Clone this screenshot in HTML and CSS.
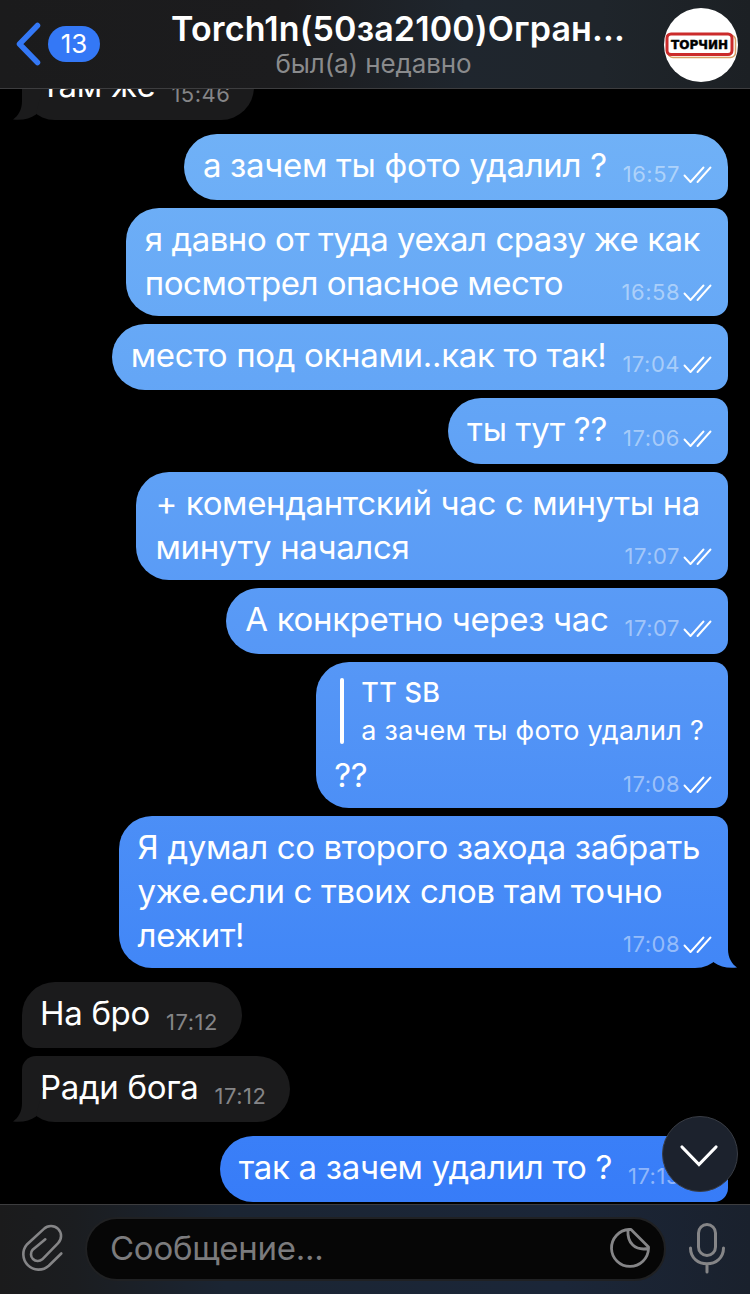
FILE: index.html
```html
<!DOCTYPE html>
<html lang="ru">
<head>
    <meta charset="utf-8">
    <title>Torch1n</title>
    <link rel="stylesheet" href="styles.css">
</head>
<body>
    <svg class="defs" width="0" height="0">
        <symbol id="checks" viewBox="0 0 30 20">
            <path d="M1.500 10.500 L7.500 17 L20.500 2.500 M14.500 17 L27.500 2.500" fill="none" stroke="#fff" stroke-width="1.900" stroke-linecap="round" stroke-linejoin="round"/>
        </symbol>
    </svg>

    <header class="header">
        <div class="back">
            <svg class="back-arrow" width="26" height="44" viewBox="0 0 26 44">
                <path d="M21.500 3.500 L3.500 22 L21.500 40.500" fill="none" stroke="#3478f6" stroke-width="5.500" stroke-linecap="round" stroke-linejoin="round"/>
            </svg>
            <span class="unread">13</span>
        </div>
        <div class="title">
            <h1 class="name">Torch1n(50за2100)Огран...</h1>
            <span class="status">был(а) недавно</span>
        </div>
        <svg class="avatar" width="74" height="74" viewBox="0 0 74 74">
            <clipPath id="round"><circle cx="37" cy="37" r="37"/></clipPath>
            <g clip-path="url(#round)">
                <rect width="74" height="74" fill="#fff"/>
                <rect x="4" y="27" width="67.500" height="22.500" rx="5" fill="#fff" stroke="#d9a066" stroke-width="1.500"/>
                <rect x="3" y="26" width="65" height="20.500" rx="4" fill="#fff" stroke="#cb2b2b" stroke-width="3"/>
                <text class="logo-text" x="7" y="40.500" textLength="57" lengthAdjust="spacingAndGlyphs">ТОРЧИН</text>
            </g>
        </svg>
    </header>

    <main class="chat">
        <div class="bubble in last">
            <p class="text">Там же</p>
            <span class="meta">15:46</span>
        </div>

        <div class="bubble out first">
            <p class="text">а зачем ты фото удалил ?</p>
            <span class="meta">16:57<svg class="checks"><use href="#checks"/></svg></span>
        </div>
        <div class="bubble out multi tight">
            <p class="text">я давно от туда уехал сразу же как<br>посмотрел опасное место</p>
            <span class="meta">16:58<svg class="checks"><use href="#checks"/></svg></span>
        </div>
        <div class="bubble out">
            <p class="text">место под окнами..как то так!</p>
            <span class="meta">17:04<svg class="checks"><use href="#checks"/></svg></span>
        </div>
        <div class="bubble out">
            <p class="text">ты тут ??</p>
            <span class="meta">17:06<svg class="checks"><use href="#checks"/></svg></span>
        </div>
        <div class="bubble out multi">
            <p class="text">+ комендантский час с минуты на<br>минуту начался</p>
            <span class="meta">17:07<svg class="checks"><use href="#checks"/></svg></span>
        </div>
        <div class="bubble out">
            <p class="text">А конкретно через час</p>
            <span class="meta">17:07<svg class="checks"><use href="#checks"/></svg></span>
        </div>
        <div class="bubble out multi with-reply">
            <div class="reply">
                <span class="reply-name">TT SB</span>
                <span class="reply-text">а зачем ты фото удалил ?</span>
            </div>
            <p class="text">??</p>
            <span class="meta">17:08<svg class="checks"><use href="#checks"/></svg></span>
        </div>
        <div class="bubble out multi last">
            <p class="text">Я думал со второго захода забрать<br>уже.если с твоих слов там точно<br>лежит!</p>
            <span class="meta">17:08<svg class="checks"><use href="#checks"/></svg></span>
        </div>

        <div class="bubble in first">
            <p class="text">На бро</p>
            <span class="meta">17:12</span>
        </div>
        <div class="bubble in last">
            <p class="text">Ради бога</p>
            <span class="meta">17:12</span>
        </div>

        <div class="bubble out first">
            <p class="text">так а зачем удалил то ?</p>
            <span class="meta">17:13<svg class="checks"><use href="#checks"/></svg></span>
        </div>

        <button class="scroll-down">
            <svg width="40" height="24" viewBox="0 0 40 24">
                <path d="M3 3 L20 20.500 L37 3" fill="none" stroke="#fff" stroke-width="3.200" stroke-linecap="round"/>
            </svg>
        </button>
    </main>

    <footer class="composer">
        <svg class="clip" width="46" height="52" viewBox="0 0 46 52">
            <path d="M42.300 31.500 L29.800 43.800 A15.300 15.300 0 0 1 8.200 22.200 L24.900 6.900 A10 10 0 0 1 39.100 21.100 L23.300 37.300 A6.800 6.800 0 0 1 13.700 27.700 L26.300 17.300" fill="none" stroke="#858587" stroke-width="2.600" stroke-linecap="round"/>
        </svg>
        <div class="field">
            <span class="placeholder">Сообщение...</span>
            <svg width="42" height="42" viewBox="0 0 42 42">
                <path d="M20 2.500 A18.500 18.500 0 1 0 39.500 21.500 V20 L22 2.500 Z M19 3 C18 16 26 24 39.500 21.500" fill="none" stroke="#858587" stroke-width="2.800" stroke-linejoin="round"/>
            </svg>
        </div>
        <svg class="mic" width="38" height="52" viewBox="0 0 38 52">
            <rect x="10.500" y="2.500" width="17" height="31" rx="8.500" fill="none" stroke="#858587" stroke-width="3"/>
            <path d="M2.500 26 C2.500 47 35.500 47 35.500 26 M19 42 V50" fill="none" stroke="#858587" stroke-width="3" stroke-linecap="round"/>
        </svg>
    </footer>
</body>
</html>
```

FILE: styles.css
```css
* {
    box-sizing: border-box;
}

body {
    display: flex;
    flex-direction: column;
    height: 1294px;
    margin: 0;
    overflow: hidden;
    background-color: #000;
    color: #fff;
    font-family: Inter, "Liberation Sans", sans-serif;
}

.defs {
    position: absolute;
}

/* Header */
.header {
    display: grid;
    grid-template-columns: 150px minmax(0, 1fr) 150px;
    flex: none;
    height: 89px;
    border-bottom: 1px solid #3d3d3f;
    background: linear-gradient(90deg, #1b1b1c 0%, #1c1c1e 38%, #1f262e 62%, #1f252b 80%, #1c2024 100%);
}

.back {
    display: flex;
    align-items: center;
    gap: 6px;
    padding-left: 16px;
}

.unread {
    width: 52px;
    height: 36px;
    border-radius: 18px;
    background-color: #3478f6;
    font-size: 26px;
    line-height: 36px;
    text-align: center;
}

.title {
    display: flex;
    flex-direction: column;
    align-items: center;
    margin: 0 -30px;
    padding-top: 9px;
    padding-right: 3px;
    white-space: nowrap;
}

.name {
    margin: 0 0 0 49px;
    font-size: 34px;
    font-weight: 600;
    line-height: 40px;
    letter-spacing: 0.15px;
}

.status {
    font-size: 26px;
    line-height: 30px;
    color: #8a8b8d;
    letter-spacing: -0.1px;
}

.avatar {
    justify-self: end;
    margin: 8px 12px 0 0;
}

.logo-text {
    font-family: "DejaVu Sans", sans-serif;
    font-size: 13px;
    font-weight: 700;
    fill: #000;
    stroke: #000;
    stroke-width: 0.5px;
}

/* Messages */
.chat {
    position: relative;
    display: flex;
    flex-direction: column;
    justify-content: flex-end;
    flex: 1;
    gap: 8px;
    min-height: 0;
    padding: 0 22px 2px;
    overflow: hidden;
}

.bubble {
    position: relative;
    display: flex;
    align-items: flex-end;
    flex: none;
    gap: 16px;
    padding: 9px 15px 13px 19px;
    white-space: nowrap;
}

.text {
    margin: 0;
    font-size: 33px;
    line-height: 44px;
    letter-spacing: -0.32px;
}

.multi .text {
    letter-spacing: -0.36px;
}

.tight .text {
    letter-spacing: -0.48px;
}

.meta {
    position: relative;
    z-index: 1;
    display: flex;
    align-items: center;
    gap: 3px;
    height: 28px;
    margin-bottom: -1px;
    font-size: 22px;
    letter-spacing: 0.5px;
    color: rgba(255, 255, 255, 0.45);
}

.checks {
    width: 30px;
    height: 20px;
    margin-top: 1px;
}

.in {
    align-self: flex-start;
    padding-left: 18px;
    padding-right: 24px;
    border-radius: 14px 33px 33px 14px;
    background-color: #1b1b1c;
}

.in .meta {
    color: #858587;
}

/* one gradient runs behind all outgoing bubbles */
.out {
    align-self: flex-end;
    border-radius: 33px 14px 14px 33px;
    background: linear-gradient(180deg, #72b3f7 89px, #63a5f6 400px, #5596f6 680px, #4287f7 960px, #377cf8 1204px) fixed;
}

.first {
    margin-top: 6px;
}

.in.first {
    border-top-left-radius: 33px;
}

.out.first {
    border-top-right-radius: 33px;
}

.in.last {
    border-bottom-left-radius: 33px;
}

.out.last {
    border-bottom-right-radius: 33px;
}

.last::after {
    content: "";
    position: absolute;
    bottom: 0;
    width: 46px;
    height: 34px;
    background: inherit;
}

.in.last::after {
    left: -9px;
    clip-path: path("M9 0 V15 C9 24 5 30 0 33.500 C9 34.500 17 33 23 28.500 L30 0 Z");
}

.out.last::after {
    right: -9px;
    clip-path: path("M37 0 V15 C37 24 41 30 46 33.500 C37 34.500 29 33 23 28.500 L16 0 Z");
}

/* text and time share one cell, the time sits in the corner */
.multi {
    display: grid;
    gap: 0;
    padding: 9px 28px 11px 19px;
}

.multi .text,
.multi .meta {
    grid-area: 1 / 1;
}

.multi .meta {
    align-self: end;
    justify-self: end;
    margin-right: -13px;
}

.with-reply {
    padding: 16px 24px 11px 18px;
}

.with-reply .text,
.with-reply .meta {
    grid-row: 2;
}

.with-reply .meta {
    margin-right: -9px;
}

.reply {
    display: flex;
    flex-direction: column;
    gap: 4px;
    position: relative;
    height: 66px;
    margin-bottom: 9px;
    padding-left: 27px;
    font-size: 27px;
    line-height: 34px;
    letter-spacing: 0.25px;
}

.reply::before {
    content: "";
    position: absolute;
    left: 6px;
    width: 4px;
    height: 66px;
    border-radius: 2px;
    background-color: #fff;
}

.reply-name {
    margin-top: -2px;
    font-weight: 500;
}

.scroll-down {
    position: absolute;
    z-index: 2;
    right: 12px;
    bottom: 12px;
    display: flex;
    align-items: center;
    justify-content: center;
    width: 76px;
    height: 76px;
    padding: 4px 2px 0 0;
    border: 1px solid #393d45;
    border-radius: 50%;
    background-color: #1c222d;
}

/* Message input */
.composer {
    display: flex;
    flex: none;
    height: 90px;
    padding: 12px 24px 0 19px;
    border-top: 1px solid #3d3d3f;
    background: linear-gradient(90deg, #1b1b1c 0%, #1b1d20 10%, #1b2533 30%, #1b2638 75%, #1a212d 100%);
}

.clip {
    margin-top: 5px;
}

.field {
    display: flex;
    justify-content: space-between;
    flex: 1;
    height: 64px;
    margin: 0 22px 0 20px;
    padding: 8px 13px 0 23px;
    border: 2px solid #202123;
    border-radius: 32px;
    background-color: #060606;
}

.placeholder {
    font-size: 33px;
    line-height: 42px;
    letter-spacing: -0.25px;
    color: #7b7b7d;
}

.mic {
    margin-top: 5px;
}
```
